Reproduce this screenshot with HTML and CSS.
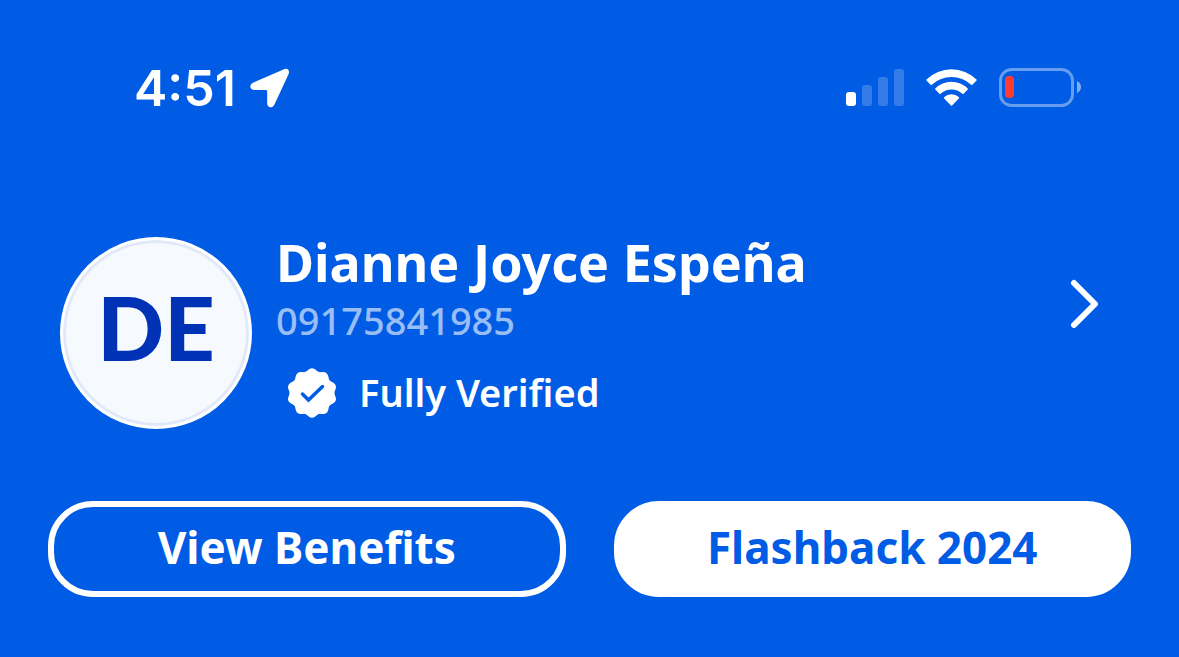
FILE: index.html
```html
<!DOCTYPE html>
<html lang="en">
<head>
    <meta charset="UTF-8">
    <meta name="viewport" content="width=device-width, initial-scale=1.0">
    <title>Profile</title>
    <link rel="stylesheet" href="styles.css">
</head>
<body>
    <header class="status-bar">
        <div class="status-left">
            <span class="time">4:51</span>
            <svg class="location-icon" width="40" height="40" viewBox="0 0 40 40" aria-hidden="true">
                <path d="M34 1.2 L3 14.8 C-1.2 16.8 -.2 22 4 22 L16 22 Q17.2 22 17.2 23.2 L17.2 35.5 C17.2 40 22.4 40.6 24.2 37 L38.4 6.4 C40.2 2.4 37.6 -.4 34 1.2 Z" fill="#fff"/>
            </svg>
        </div>
        <div class="status-right">
            <svg width="58" height="37" viewBox="0 0 58 37" aria-hidden="true">
                <rect x="0" y="23" width="10" height="14" rx="3" fill="#fff"/>
                <g fill="#fff" fill-opacity=".2">
                    <rect x="16" y="16" width="10" height="21" rx="3"/>
                    <rect x="32" y="8" width="10" height="29" rx="3"/>
                    <rect x="48" y="0" width="10" height="37" rx="3"/>
                </g>
            </svg>
            <svg width="51" height="37" viewBox="0 0 51 37" aria-hidden="true">
                <g fill="#fff">
                    <path d="M.5 10.4 A36 36 0 0 1 50.5 10.4 Q51 11 50.5 11.5 L46.4 15.7 Q45.8 16.2 45.2 15.7 A29 29 0 0 0 5.8 15.7 Q5.2 16.2 4.6 15.7 L.5 11.5 Q0 11 .5 10.4 Z"/>
                    <path d="M9.3 19.4 A23 23 0 0 1 41.7 19.4 Q42.2 20 41.7 20.5 L37.6 24.7 Q37 25.2 36.4 24.7 A16 16 0 0 0 14.6 24.7 Q14 25.2 13.4 24.7 L9.3 20.5 Q8.8 20 9.3 19.4 Z"/>
                    <path d="M18 28.2 A11 11 0 0 1 33 28.2 Q33.5 28.8 33 29.3 L26.1 36.4 Q25.5 37 24.9 36.4 L18 29.3 Q17.5 28.8 18 28.2 Z"/>
                </g>
            </svg>
            <svg width="83" height="39" viewBox="0 0 83 39" aria-hidden="true">
                <rect x="1.5" y="1.5" width="72" height="36" rx="11" fill="none" stroke="#fff" stroke-opacity=".4" stroke-width="3"/>
                <path d="M78 13 Q82 15 82 19 T78 25 Z" fill="#fff" fill-opacity=".5"/>
                <rect x="6" y="8" width="9" height="22" rx="4" fill="#ff3b30"/>
            </svg>
        </div>
    </header>

    <main>
        <a class="profile" href="#profile">
            <span class="avatar">DE</span>
            <span class="info">
                <strong class="name">Dianne Joyce Espeña</strong>
                <span class="phone">09175841985</span>
                <span class="verified">
                    <svg width="50" height="50" viewBox="0 0 50 50" aria-hidden="true">
                        <path d="M20.5 2.6 Q25 -2 29.5 2.6 Q31.5 4.6 34.5 4 Q40.8 3.2 41.6 9.5 Q41.8 12.6 45 14 Q50.8 17 48.2 22 Q46.8 25 48.2 28 Q50.8 33 45 36 Q41.8 37.4 41.6 40.5 Q40.8 46.8 34.5 46 Q31.5 45.4 29.5 47.4 Q25 52 20.5 47.4 Q18.5 45.4 15.5 46 Q9.2 46.8 8.4 40.5 Q8.2 37.4 5 36 Q-.8 33 1.8 28 Q3.2 25 1.8 22 Q-.8 17 5 14 Q8.2 12.6 8.4 9.5 Q9.2 3.2 15.5 4 Q18.5 4.6 20.5 2.6 Z" fill="#fff"/>
                        <path d="M15.5 26 L21.5 32 L35.5 18.500" fill="none" stroke="#005ce5" stroke-width="3.500" stroke-linecap="round"/>
                    </svg>
                    <span>Fully Verified</span>
                </span>
            </span>
            <svg class="chevron" width="30" height="50" viewBox="0 0 30 50" aria-hidden="true">
                <path d="M4 4 L25 25 L4 46" fill="none" stroke="#fff" stroke-width="6" stroke-linecap="round" stroke-linejoin="round"/>
            </svg>
        </a>

        <div class="actions">
            <button type="button" class="btn btn-outline">View Benefits</button>
            <button type="button" class="btn btn-solid">Flashback 2024</button>
        </div>
    </main>
</body>
</html>
```
FILE: styles.css
```css
* {
    box-sizing: border-box;
}

body {
    margin: 0;
    min-height: 100vh;
    background-color: #005ce5;
    color: #fff;
    font-family: 'Noto Sans', sans-serif;
}

.status-bar {
    display: flex;
    justify-content: space-between;
    align-items: center;
    padding: 58px 97px 0 134px;
    font-family: 'Inter', sans-serif;
}

.status-left,
.status-right {
    display: flex;
    align-items: center;
}

.status-left {
    gap: 14px;
}

.status-right {
    gap: 22px;
    padding-bottom: 2px;
}

.time {
    font-size: 50px;
    font-weight: 600;
    line-height: 60px;
}

.profile {
    display: flex;
    align-items: flex-start;
    gap: 24px;
    padding: 119px 79px 0 60px;
    color: inherit;
    text-decoration: none;
}

.avatar {
    flex: none;
    display: flex;
    align-items: center;
    justify-content: center;
    width: 192px;
    height: 192px;
    padding-bottom: 12px;
    border: 3px solid #fff;
    border-radius: 50%;
    background-color: #f6f9fe;
    box-shadow: inset 0 0 0 3px #e1e9f9;
    color: #0032b5;
    font-family: 'Lato', sans-serif;
    font-size: 88px;
    font-weight: 900;
}

.info {
    flex: 1;
    display: flex;
    flex-direction: column;
}

.name {
    font-size: 52px;
    font-weight: 700;
    line-height: 50px;
}

.phone {
    font-size: 38px;
    font-weight: 500;
    line-height: 66px;
    color: #99bef5;
}

.verified {
    display: flex;
    align-items: center;
    gap: 22px;
    margin-top: 15px;
    padding-left: 11px;
    font-size: 38px;
    font-weight: 600;
    line-height: 48px;
}

.verified span {
    padding-bottom: 2px;
}

.chevron {
    flex: none;
    margin-top: 42px;
}

.actions {
    display: grid;
    grid-template-columns: 1fr 1fr;
    gap: 48px;
    padding: 72px 48px 60px;
}

.btn {
    height: 96px;
    padding: 0 0 4px;
    border: 6px solid #fff;
    border-radius: 45px;
    font-family: inherit;
    font-size: 44px;
    font-weight: 700;
    cursor: pointer;
}

.btn-outline {
    background-color: transparent;
    color: #fff;
}

.btn-solid {
    background-color: #fff;
    color: #005ce5;
}
```
